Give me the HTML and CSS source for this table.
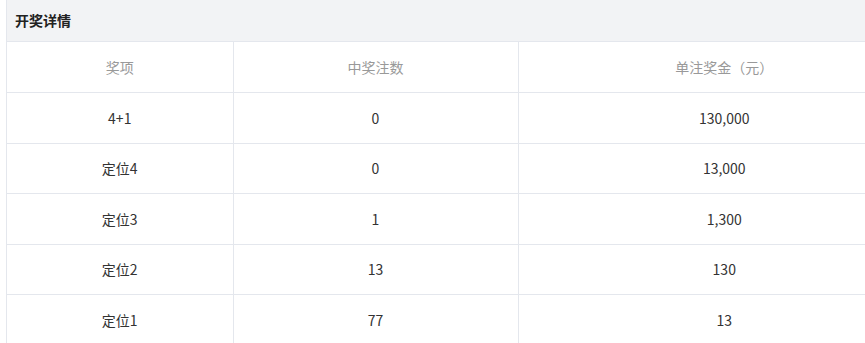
FILE: index.html
```html
<!DOCTYPE html>
<html lang="zh">
<head>
<meta charset="utf-8">
<link rel="stylesheet" href="styles.css">
</head>
<body>
<div class="panel">
  <div class="panel-head">开奖详情</div>
  <table class="detail">
    <colgroup><col class="c1"><col class="c2"><col class="c3"></colgroup>
    <thead>
      <tr><th>奖项</th><th>中奖注数</th><th>单注奖金（元）</th></tr>
    </thead>
    <tbody>
      <tr><td>4+1</td><td>0</td><td>130,000</td></tr>
      <tr><td>定位4</td><td>0</td><td>13,000</td></tr>
      <tr><td>定位3</td><td>1</td><td>1,300</td></tr>
      <tr><td>定位2</td><td>13</td><td>130</td></tr>
      <tr><td>定位1</td><td>77</td><td>13</td></tr>
    </tbody>
  </table>
</div>
</body>
</html>
```
FILE: styles.css
```css
html, body {
  margin: 0;
  padding: 0;
  background: #fff;
}
body {
  font-family: "Microsoft YaHei", "Noto Sans CJK SC", "Noto Sans", sans-serif;
  font-size: 14px;
  color: #333;
  overflow: hidden;
}
.panel {
  margin-left: 6px;
  border-left: 1px solid #e4e7ed;
}
.panel-head {
  height: 42px;
  line-height: 40px;
  background: #f2f3f5;
  padding-left: 8px;
  font-weight: bold;
  color: #222;
  border-bottom: 1px solid #e4e7ed;
  box-sizing: border-box;
}
.detail {
  width: 100%;
  border-collapse: collapse;
  table-layout: fixed;
}
.c1 { width: 226px; }
.c2 { width: 285px; }
.detail th, .detail td {
  height: 49.5px;
  padding: 0;
  text-align: center;
  border-right: 1px solid #e4e7ed;
  border-bottom: 1px solid #e4e7ed;
  font-weight: normal;
}
.detail th {
  height: 50px;
  color: #999;
}
.detail th:last-child, .detail td:last-child {
  border-right: none;
  padding-left: 65px;
}
```
